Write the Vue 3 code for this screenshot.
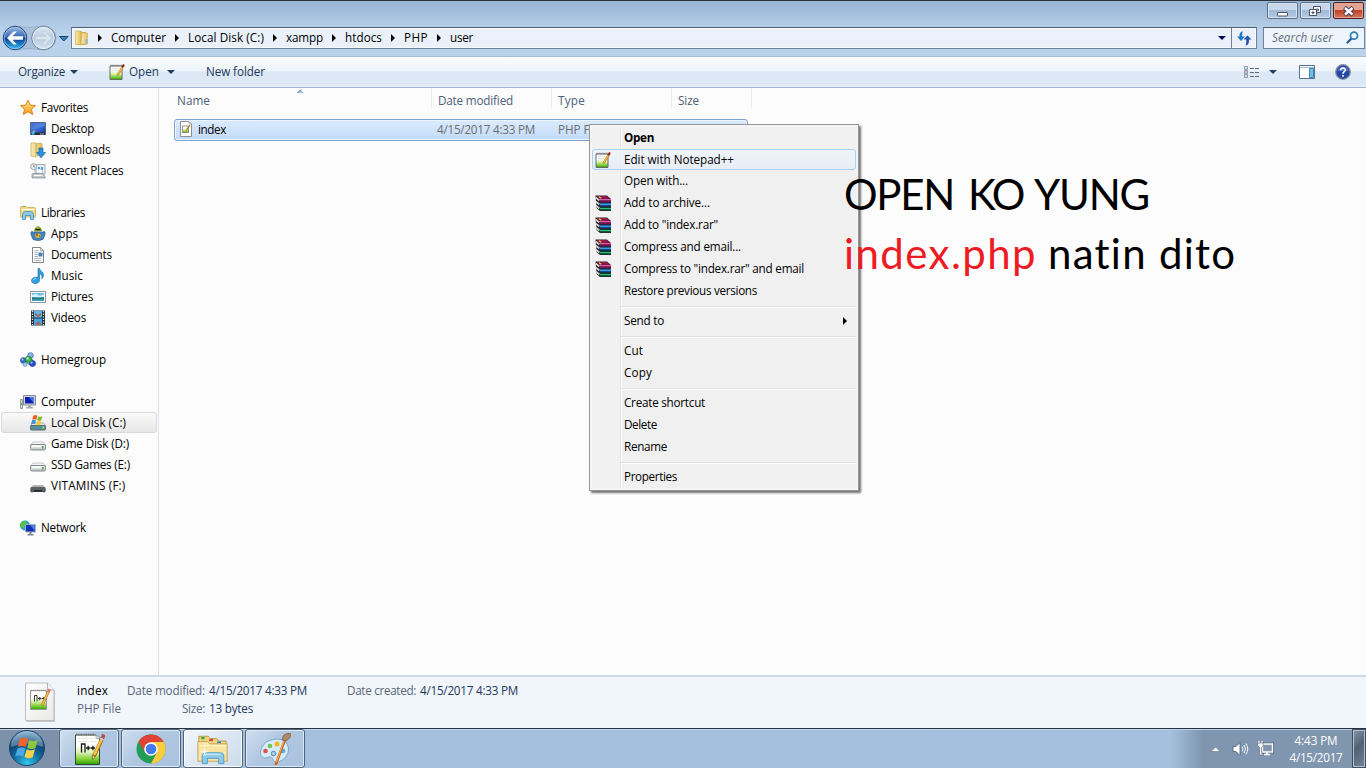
<script setup>
const fit = (el, { value }) => {
  el.style.letterSpacing = '0px'
  const n = el.textContent.length
  const natural = el.getBoundingClientRect().width
  el.style.letterSpacing = (value - natural) / n + 'px'
}
const vFit = { mounted: fit, updated: fit }

const crumbs = [
  { t: 'Computer', w: 55 }, { t: 'Local Disk (C:)', w: 76 }, { t: 'xampp', w: 37 },
  { t: 'htdocs', w: 37 }, { t: 'PHP', w: 24 }, { t: 'user', w: 23 },
]
const nav = [
  [{ t: 'Favorites', w: 47, i: 'star' }, { t: 'Desktop', w: 43, i: 'desktop' }, { t: 'Downloads', w: 59.5, i: 'downloads' }, { t: 'Recent Places', w: 72.5, i: 'recent' }],
  [{ t: 'Libraries', w: 44, i: 'libraries' }, { t: 'Apps', w: 27, i: 'apps' }, { t: 'Documents', w: 61, i: 'document' }, { t: 'Music', w: 32, i: 'music' }, { t: 'Pictures', w: 42, i: 'picture' }, { t: 'Videos', w: 35, i: 'video' }],
  [{ t: 'Homegroup', w: 65, i: 'homegroup' }],
  [{ t: 'Computer', w: 54.5, i: 'computer' }, { t: 'Local Disk (C:)', w: 75, i: 'osdisk', sel: true }, { t: 'Game Disk (D:)', w: 78, i: 'disk' }, { t: 'SSD Games (E:)', w: 79, i: 'disk' }, { t: 'VITAMINS (F:)', w: 74.500, i: 'usb' }],
  [{ t: 'Network', w: 45, i: 'network' }],
]
const menu = [
  { t: 'Open', w: 30, bold: true },
  { t: 'Edit with Notepad++', w: 110, i: 'npp', hot: true },
  { t: 'Open with...', w: 64 },
  { t: 'Add to archive...', w: 86, i: 'rar' },
  { t: 'Add to "index.rar"', w: 94, i: 'rar' },
  { t: 'Compress and email...', w: 117, i: 'rar' },
  { t: 'Compress to "index.rar" and email', w: 180, i: 'rar' },
  { t: 'Restore previous versions', w: 133 },
  { sep: true },
  { t: 'Send to', w: 40, sub: true },
  { sep: true },
  { t: 'Cut', w: 19 }, { t: 'Copy', w: 28 },
  { sep: true },
  { t: 'Create shortcut', w: 81 }, { t: 'Delete', w: 33 }, { t: 'Rename', w: 43 },
  { sep: true },
  { t: 'Properties', w: 53 },
]
const tasks = ['nppbig', 'chrome', 'explorer', 'paint']
</script>

<template>
  <div class="screen">
    <svg class="defs" width="0" height="0">
      <defs>
        <linearGradient id="gBlue" x1="0" y1="0" x2="0" y2="1"><stop offset="0" stop-color="#9fbfe8" /><stop offset=".48" stop-color="#2f62b4" /><stop offset=".52" stop-color="#0a3b94" /><stop offset="1" stop-color="#35c5fb" /></linearGradient>
        <linearGradient id="gGrey" x1="0" y1="0" x2="0" y2="1"><stop offset="0" stop-color="#dde8f4" /><stop offset=".5" stop-color="#b9cbdf" /><stop offset="1" stop-color="#d5e3f2" /></linearGradient>
        <linearGradient id="gFolder" x1="0" y1="0" x2="1" y2="0"><stop offset="0" stop-color="#fbeeb0" /><stop offset="1" stop-color="#e3bf5c" /></linearGradient>
        <linearGradient id="gGreen" x1="0" y1="0" x2="0" y2="1"><stop offset=".35" stop-color="#fff" /><stop offset=".58" stop-color="#dcf2b4" /><stop offset=".82" stop-color="#7fd035" /><stop offset="1" stop-color="#2aa005" /></linearGradient>
        <linearGradient id="gScreen" x1="0" y1="0" x2="1" y2="1"><stop offset="0" stop-color="#1f48a8" /><stop offset=".5" stop-color="#3a70dc" /><stop offset="1" stop-color="#153088" /></linearGradient>
        <linearGradient id="gStar" x1="0" y1="0" x2="0" y2="1"><stop offset="0" stop-color="#ffe98a" /><stop offset="1" stop-color="#f89a1c" /></linearGradient>
        <linearGradient id="gDisk" x1="0" y1="0" x2="0" y2="1"><stop offset="0" stop-color="#fff" /><stop offset="1" stop-color="#b9bec3" /></linearGradient>
        <linearGradient id="gPage" x1="0" y1="0" x2="1" y2="1"><stop offset="0" stop-color="#fff" /><stop offset="1" stop-color="#e9e9e6" /></linearGradient>
        <radialGradient id="gOrb" cx=".5" cy=".95" r=".9"><stop offset="0" stop-color="#35c8f2" /><stop offset=".45" stop-color="#11699c" /><stop offset=".75" stop-color="#0d4270" /><stop offset="1" stop-color="#6d9cc0" /></radialGradient>
      </defs>
      <symbol id="star" viewBox="0 0 16 16"><path d="M8 .2 10.200 5.100 15.500 5.600 11.500 9.200 12.700 14.500 8 11.700 3.300 14.500 4.500 9.200.5 5.600 5.800 5.100z" fill="url(#gStar)" stroke="#dc8128" /></symbol>
      <symbol id="desktop" viewBox="0 0 16 16"><path d="M.5 1.500h15v12H.5z" fill="url(#gScreen)" stroke="#4d6489" /><path d="M1 2h14v3L1 9z" fill="#6fa0ec" opacity=".45" /><path d="M1 11.500h14V14H1z" fill="#282f3c" /><circle cx="3" cy="12" r="1.700" fill="#42baf0" /><path d="M3.500 9.500h1.200v1.600H3.500z" fill="#ffd337" /><path d="M10 12.500h4v1h-4z" fill="#aaa" /></symbol>
      <symbol id="folder" viewBox="0 0 16 16"><path d="M2 1.500h5.500l1 1H12v12H2z" fill="#e0bc5c" stroke="#bf9a42" stroke-width=".6" /><path d="M1.500 1h5v14l-5-1z" fill="url(#gFolder)" stroke="#d0ac58" stroke-width=".6" /><path d="M8 3h5.500v11H7z" fill="url(#gFolder)" stroke="#d0ac58" stroke-width=".6" /><path d="M11.500 9H13v4h-1.500z" fill="#73bce9" /></symbol>
      <symbol id="downloads" viewBox="0 0 16 16"><path d="M1 1h5v14l-5-1zM6.500 1.500H12V13l-5 1z" fill="url(#gFolder)" stroke="#c9a44e" stroke-width=".7" /><path d="M9 6h4v4.500h2.700L11 15.800 6.500 10.500H9z" fill="#2a92dc" stroke="#1467a8" stroke-width=".7" /></symbol>
      <symbol id="recent" viewBox="0 0 16 16"><path d="M5 1.500h10V11H5z" fill="#e9eef2" stroke="#8e969d" stroke-width=".8" /><path d="M6.500 6h6v4h-6z" fill="#fff" stroke="#8eb2cf" stroke-width=".5" /><path d="M8 4h2v2H8zM11 4h2v3h-2z" fill="#4aa3dc" /><path d="M2 10.500h11l2.500 4.500H2z" fill="#c4c7ca" stroke="#868b90" stroke-width=".7" /><path d="M4 12.500h8" stroke="#fff" /><circle cx="3.700" cy="3.700" r="3" fill="#f1f3f4" stroke="#969da4" /><path d="M3.700 1.800v2.200h1.600" fill="none" stroke="#555" stroke-width=".7" /></symbol>
      <symbol id="libraries" viewBox="0 0 16 16"><path d="M.5 2.500q0-1 1-1h5l1 1h6.500l1.500 1V12H.5z" fill="#f4da86" stroke="#c9a850" stroke-width=".8" /><path d="M1 4.500h14" stroke="#fffbe0" /><path d="M3 1.500h2" stroke="#55b850" /><path d="M2.500 14.500V9.500q.5-3 3-3h5q2.500 0 3 3v5h-3v-4h-5v4z" fill="#8bcaec" stroke="#3f8fbd" stroke-width=".8" /></symbol>
      <symbol id="apps" viewBox="0 0 16 16"><path d="M4.500 5Q5 .8 8 .8t3.500 4.200z" fill="#a6c91d" stroke="#4c7020" stroke-width=".6" /><path d="M5.500 3.500h5" stroke="#141414" stroke-width="1.300" /><path d="M1 6q1-1 2 0h10q1-1 2 0v2.500l-2 5Q8 15.500 3 13.500L1 8.500z" fill="#4683bc" stroke="#285c8d" stroke-width=".7" /><path d="m5 8.500 3-1 3 1.500-1 2.500H6z" fill="#ffc927" /><circle cx="7" cy="9" r="1.200" fill="#e3391b" /><circle cx="9.500" cy="10" r=".9" fill="#3cab38" /></symbol>
      <symbol id="document" viewBox="0 0 16 16"><path d="M2.500.5h8l3 3v12h-11z" fill="#fff" stroke="#858585" /><path d="M10.500.5v3h3" fill="#ddd" stroke="#858585" stroke-width=".7" /><path d="M4.500 3.500h4M4.500 5.500H8M4.500 7.500H8M4.500 9.500H8M4.500 11.500h7M4.500 13.500h7" stroke="#93a4b6" stroke-width=".8" /><path d="M8.500 5.500h4v4h-4z" fill="#3c7fb9" /></symbol>
      <symbol id="music" viewBox="0 0 16 16"><path d="M8 .5h1.500c.5 2.500 4 3.300 4 6.500 0 1.500-.8 2.800-1.700 3.800C12.500 7.500 11 6 9.600 6v6.300c0 2-2 3.200-4.400 3.200s-3.700-1.200-3.700-2.800c0-2 2-3.400 4.300-3.400H8z" fill="#2f9de2" stroke="#1765a5" stroke-width=".6" /><path d="M3 12.500q1-2 3-2" stroke="#a6dfff" fill="none" /></symbol>
      <symbol id="picture" viewBox="0 0 16 16"><path d="M.5 2.500h15v11H.5z" fill="#fff" stroke="#8695a4" /><path d="M2 4h12v8H2z" fill="#6ebff0" /><path d="M2 6q4-2 6 0t6-1v3H2z" fill="#d9f3ff" /><path d="M2 8q5 1 12 0v4H2z" fill="#287f76" /><path d="M2 10.500h12V12H2z" fill="#3da4c4" /></symbol>
      <symbol id="video" viewBox="0 0 16 16"><path d="M1 .5h14v15H1z" fill="#222c34" /><path d="M4 1h8v6.500H4z" fill="#58b8f1" /><path d="M4 8.500h8V15H4z" fill="#4aa5e5" /><path d="m5 3 3 2 3-2v2L8 7 5 5zM5 14.500l3-3 3 2v1z" fill="#b65c43" /><path d="M2.500 1v14M13.500 1v14" stroke="#e5ebef" stroke-width="1.300" stroke-dasharray="1.300 1.300" /></symbol>
      <symbol id="homegroup" viewBox="0 0 16 16"><path d="M3.500 8 10 3l3 8-4 1z" fill="none" stroke="#7caad8" stroke-width="2" /><circle cx="10.500" cy="3.500" r="2.800" fill="#8bb4e6" stroke="#3c6fba" stroke-width=".8" /><circle cx="3.300" cy="8.500" r="2.800" fill="#3171d4" stroke="#1d48a0" stroke-width=".8" /><circle cx="5" cy="12.500" r="2" fill="#a8c4ea" stroke="#5d87c4" stroke-width=".6" /><circle cx="12.500" cy="11.500" r="3" fill="#2b55cb" stroke="#1b3a98" stroke-width=".8" /><circle cx="8.500" cy="7.500" r="3.100" fill="#43b447" stroke="#197b33" stroke-width=".8" /><circle cx="7.600" cy="6.400" r="1.200" fill="#c3f4bc" /><circle cx="11.500" cy="10.500" r="1" fill="#a5c9ff" /><circle cx="2.500" cy="7.500" r=".9" fill="#b9d7ff" /></symbol>
      <symbol id="computer" viewBox="0 0 16 16"><path d="M3.500 1.500h12v9.500h-12z" fill="#d4d9df" stroke="#818a94" /><path d="M5 3h9v6.500H5z" fill="#0c20b4" /><path d="M9 3h5v6.500z" fill="#4378eb" /><path d="M8 11h3v2h2v1.500H6V13h2z" fill="#a5acb4" /><path d="M.5 5.500h2v9h-2z" fill="#d6dadc" stroke="#777" stroke-width=".7" /><path d="M1 9h1v2H1z" fill="#39bd3d" /></symbol>
      <symbol id="disk" viewBox="0 0 16 16"><path d="M3 6h10l2.500 3H.5z" fill="#f3f4f5" stroke="#a4a8ac" stroke-width=".6" /><rect x=".5" y="8.500" width="15" height="5.500" rx="1.500" fill="url(#gDisk)" stroke="#85898d" /><path d="M2 10.500h9" stroke="#fff" /><path d="M12 10h1.500v2.500H12z" fill="#39a42b" /></symbol>
      <symbol id="osdisk" viewBox="0 0 16 16"><path d="M2.500 8h11l2 3H.5z" fill="#e5e8e9" stroke="#888" stroke-width=".6" /><rect x=".5" y="10.500" width="15" height="4.500" rx="1" fill="#568f9d" stroke="#5d676d" /><path d="M12.500 11.500H14v2h-1.500z" fill="#a2ec58" /><path d="M3.300.8q2-1.500 4 0l-1 4q-2-1.200-4 0z" fill="#ed5a24" /><path d="M8 1.300q2 1 4.200 0l-1 4q-2 1-4 0z" fill="#79ba2e" /><path d="M2 5.300q2-1 4 0l-1 4q-2-1.200-4 0z" fill="#3f8fdf" /><path d="M6.800 5.800q2 1 4.200 0l-1 4q-2 1-4 0z" fill="#fdc72c" /></symbol>
      <symbol id="usb" viewBox="0 0 16 16"><path d="M3 7h10l2.500 3H.5z" fill="#b3b6b8" /><path d="M1 9.500h14q1 2.500 0 4.500h-2l-1-2H4l-1 2H1q-1-2 0-4.500z" fill="#5d6164" stroke="#44484a" stroke-width=".6" /><path d="M4 12h8l1 2H3z" fill="#2d3032" /></symbol>
      <symbol id="network" viewBox="0 0 16 16"><circle cx="5" cy="5.500" r="5" fill="#2b96df" /><path d="M2 1.500 6 1l1.500 2-3 2L4 9 1 7q-2-3 1-5.500z" fill="#55c545" /><path d="M5.500 4.500h10V12h-10z" fill="#1033bd" stroke="#a6b0bd" /><path d="M10 5h5v6z" fill="#4b79eb" /><path d="M9.500 12h2v2h2v1.500h-6V14h2z" fill="#7c8792" /></symbol>
      <symbol id="npp" viewBox="0 0 16 16"><path d="M1 2h12v13.500H1z" fill="url(#gGreen)" stroke="#686a69" /><path d="M1.500 1.500h11" stroke="#666" stroke-width="1.500" stroke-dasharray="1 1" /><path d="M3 4.500h7M3 6.500h6" stroke="#dcdcdc" stroke-width=".8" /><path d="M13.500 3 8.300 11.500" stroke="#b07818" stroke-width="2.200" /><path d="M13.300 3 8.600 11" stroke="#fbc63c" stroke-width="1.200" /><path d="m13.400 3.200 1.500-2.600" stroke="#8e1414" stroke-width="2" /></symbol>
      <symbol id="rar" viewBox="0 0 16 16">
        <path d="M.5.500H12L16 4v12H5L1.500 13z" fill="#2a2230" />
        <path d="M1.300 1h10.200L15 3.800H4.800z" fill="#94184f" /><path d="M5 4h11v1.500H5z" fill="#e35aae" /><path d="M5 5.500h11V7H5z" fill="#7c1047" />
        <path d="M5 7.500h10.500v1H5z" fill="#0e2d66" /><path d="M5 8.500h11V10H5z" fill="#3c9be0" /><path d="M5 10h11v1.200H5z" fill="#0d4a94" />
        <path d="M5 12h10.500v1H5z" fill="#07412a" /><path d="M5 13h11v1.300H5z" fill="#2dc077" /><path d="M5 14.300h11v1H5z" fill="#08603a" />
        <path d="m.8 2.600 3.500 2.800M.8 6.600l3.500 2.800M.8 10.600l3.500 2.800" stroke="#fff" stroke-width="1.800" /><path d="m.8 2.600 3.500 2.800M.8 6.600l3.500 2.800M.8 10.600l3.500 2.800" stroke="#777" stroke-width=".5" />
        <path d="m4 1.800 2.300 1.400" stroke="#f2cf28" stroke-width="1.300" />
      </symbol>
      <symbol id="file" viewBox="0 0 16 16"><path d="M2.500.5h8.500L13.500 3v12.500h-11z" fill="#fdfdfb" stroke="#8e8e8e" /><path d="M11 .5V3h2.500" fill="none" stroke="#aaa" stroke-width=".7" /><path d="M4.500 5h6v6.500h-6z" fill="url(#gGreen)" stroke="#858585" stroke-width=".9" /><path d="m11.800 4-3.600 5.500" stroke="#b27c1f" stroke-width="1.300" /></symbol>
      <symbol id="bigfile" viewBox="0 0 32 40"><path d="M2.500 2h22l6.500 7v31H2.500z" fill="#c8c8c8" /><path d="M1.500 1h22l6.500 7v30.500H1.500z" fill="url(#gPage)" stroke="#bdbdbd" /><path d="M23.500 1v7H30" fill="#f6f6f6" stroke="#b5b5b5" /><path d="M6.500 8.500h16v19h-16z" fill="url(#gGreen)" stroke="#999" /><path d="M7 8.500h15" stroke="#888" stroke-width="1.600" stroke-dasharray="1 1" /><path d="M10.500 19.500v-6h2.500v6M14 16.500h3.500M15.800 15v3.500m2.200-2h3.500M19.800 15v3.500" fill="none" stroke="#222" stroke-width=".9" /><path d="M24.500 9.500 18 23.500" stroke="#b0762a" stroke-width="2.800" /><path d="M24.500 9.500 18.300 23" stroke="#f4bd52" stroke-width="1.600" /><path d="m24.300 10 1.300-2.800" stroke="#d6786f" stroke-width="2.800" /></symbol>
      <symbol id="nppbig" viewBox="0 0 32 32"><path d="M2.500 2h20.500l3.500 3v26.500h-24z" fill="url(#gGreen)" stroke="#3b443b" /><path d="M3 1.500h19" stroke="#777" stroke-width="2" stroke-dasharray="1.200 1.200" /><path d="M23 2v3.500h4" fill="#e8e8e8" stroke="#888" stroke-width=".6" /><path d="M5 5.500h16M5 8.500h18M5 20.500h14" stroke="#d9e1d6" stroke-width=".7" /><path d="M8.500 19.500V11h3.500v8.500M13 15h4.500M15.200 12.800v4.400M18 15h4M20 12.800v4.400" fill="none" stroke="#181818" stroke-width="1.300" /><path d="M29.500 5 21 23" stroke="#a66a18" stroke-width="3.800" /><path d="M29.200 5 21.300 22" stroke="#ffc747" stroke-width="2.200" /><path d="M29 6 31 1.500" stroke="#b3525a" stroke-width="3.800" /><path d="m28.500 7 .8-1.700" stroke="#c9ccd4" stroke-width="3.800" /><path d="m19.300 22.200 3.400 1.600-3.200 2.700z" fill="#e8c8a0" stroke="#6c4c24" stroke-width=".6" /></symbol>
      <symbol id="chrome" viewBox="0 0 32 32"><circle cx="16" cy="16" r="14.500" fill="#249c56" /><path d="M28.560 8.750A14.500 14.500 0 0 1 16 30.500L22 19.500 16 8.750z" fill="#fdcd40" /><path d="M3.440 8.750A14.500 14.500 0 0 1 28.560 8.750L16 9l-6 10z" fill="#df4335" /><circle cx="16" cy="16" r="6.800" fill="#fff" /><circle cx="16" cy="16" r="5.300" fill="#427bec" /></symbol>
      <symbol id="explorer" viewBox="0 0 34 32"><path d="M2 8V2.500h10l2 2.500h7l2 2.500h8V14H2z" fill="#efd684" stroke="#b39243" /><path d="M4.500 4.500H8" stroke="#25a844" stroke-width="2.200" /><path d="M13 6.500h4" stroke="#d2482e" stroke-width="2.200" /><path d="M21.500 9h4" stroke="#3585ce" stroke-width="2.200" /><path d="M1 8h10.500l2 2.500H32v18.500H1z" fill="#fae7a5" stroke="#c3a150" /><path d="M2 12.500h29.500" stroke="#fff7cf" /><path d="M2 15h29M2 18h29" stroke="#f4dd95" stroke-width=".8" /><path d="M5.500 31.500V23q.5-3 3.500-3h16q3 0 3.500 3v8.500h-5.500V26H11v5.500z" fill="#8ecbe9" stroke="#4d9cc9" /><path d="M7 23q.5-1.500 2-1.500h16" stroke="#e9faff" fill="none" /><path d="m8 13.500.8 4.700 4.200.8-4.200.8-.8 4.700-.8-4.700L3 19l4.200-.8z" fill="#fff" /></symbol>
      <symbol id="paint" viewBox="0 0 32 32"><path d="M12 7c9-3 18 1 17.500 10-.5 7-6.500 11.500-12 12-4.500.3-2.500-4.500-6-5-3-.4-4 2-7 .8-4.500-2-3.500-8-1-11.500C5.500 10 8 8 12 7z" fill="#d5ebf9" stroke="#7ba6c6" /><circle cx="6.500" cy="18" r="2.300" fill="#e25343" /><circle cx="11" cy="13" r="2.300" fill="#76c548" /><circle cx="18" cy="11" r="2.500" fill="#f4b51f" /><circle cx="14.500" cy="20.500" r="2.300" fill="#a5cce5" stroke="#5f90b5" /><circle cx="24" cy="18" r="2.300" fill="#53abe1" /><path d="M25.500 8 21 20l-4 11" stroke="#c96a20" stroke-width="2.600" fill="none" stroke-linecap="round" /><path d="M25 8 20.500 20l-3 9" stroke="#f6a95c" stroke-width="1.200" fill="none" /><path d="m23 6.500 2-4.500q4-3 7.500-1-.5 4-5.500 7z" fill="#b08a68" stroke="#775033" stroke-width=".7" /></symbol>
    </svg>

    <header class="title">
      <div class="winbtns">
        <span class="wb"><svg width="30" height="17"><rect x="9.500" y="9.500" width="10" height="3.500" rx=".5" fill="#fff" stroke="#4a5263" /></svg></span>
        <span class="wb"><svg width="30" height="17"><path d="M12.500 3.500h7v6h-7z" fill="#fff" stroke="#4a5263" /><path d="M15 6h2.500v2H15z" fill="#a6bedb" stroke="#4a5263" stroke-width=".8" /><path d="M8.500 6.500h7v6h-7z" fill="#fff" stroke="#4a5263" /><path d="M11 9h2v1.200h-2z" fill="#a6bedb" stroke="#4a5263" /></svg></span>
        <span class="wb close"><svg width="29" height="17"><path d="m10.500 4.500 8.500 7.500m0-7.500-8.500 7.500" stroke="#4a3f52" stroke-width="4.400" /><path d="m11 5 7.500 6.500m0-6.500L11 11.500" stroke="#fff" stroke-width="2.400" /></svg></span>
      </div>
      <div class="navbar">
        <svg class="arrows" width="72" height="28" viewBox="0 0 72 28">
          <path d="M14 2q14 3 30 0a12 12 0 0 1 0 24q-14-3-30 0z" fill="#a9c0da" stroke="#8aa6c6" stroke-width=".7" />
          <circle cx="15" cy="14" r="11.700" fill="url(#gBlue)" stroke="#26406c" /><circle cx="15" cy="14" r="10.700" fill="none" stroke="#b7d6f4" stroke-width=".8" opacity=".8" />
          <path d="M7 14 13.500 7.500h3.300l-4.300 4.800H23v3.400H12.500l4.300 4.800h-3.300z" fill="#fff" />
          <circle cx="43.500" cy="14" r="11.700" fill="url(#gGrey)" stroke="#697f9a" /><circle cx="43.500" cy="14" r="10.700" fill="none" stroke="#edf5fc" stroke-width=".8" />
          <path d="M51.500 14 45 7.500h-3.300l4.300 4.800H35.500v3.400H46l-4.300 4.800H45z" fill="#d9e5f1" stroke="#b3c5d9" stroke-width=".5" />
          <path d="M59.500 12.500h8.500l-4.200 4.500z" fill="#2f88b8" stroke="#1c3f70" />
        </svg>
        <div class="address">
          <svg class="fold" width="16" height="16"><use href="#folder" /></svg>
          <span v-for="c in crumbs" :key="c.t" class="crumb"><i class="tri"></i><span v-fit="c.w">{{ c.t }}</span></span>
          <i class="caret navy"></i>
          <span class="refresh"><svg width="16" height="16" viewBox="0 0 16 16"><path d="M7 1.500C4 1.500 3.500 4 3.500 6.500H1l4 4.500 4-4.500H6.300C6.300 4.500 6 2.500 7 1.500z" fill="#1f7bc4" /><path d="M9.500 15.500c3 0 3.500-3 3.500-6h2.500L11.500 5.500l-4 4h2.700c0 3 .3 4.500-.7 6z" fill="#2652ac" /></svg></span>
        </div>
        <div class="search"><span v-fit="61">Search user</span><svg width="13" height="13" viewBox="0 0 13 13"><path d="m1.500 11.500 4-4" stroke="#275f9d" stroke-width="2.300" stroke-linecap="round" /><circle cx="8" cy="4.700" r="3.500" fill="#eef8ff" stroke="#2e7cba" stroke-width="1.700" /></svg></div>
      </div>
    </header>

    <div class="toolbar">
      <span class="organize"><span v-fit="47">Organize</span></span><i class="caret"></i>
      <svg class="tnpp" width="16" height="16"><use href="#npp" /></svg>
      <span v-fit="30">Open</span><i class="caret second"></i>
      <span v-fit="59" class="newf">New folder</span>
      <div class="tools">
        <svg width="16" height="12"><path d="M.5.500h3v3h-3zM.5 4.500h3v3h-3zM.5 8.500h3v3h-3z" fill="#fff" stroke="#8b9bb0" /><path d="M1.500 2h1M1.500 10h1" stroke="#3e7fbd" /><path d="M1.500 6h1" stroke="#d33" stroke-width="1.400" /><path d="M6 2.500h4m1 0h4M6 6.500h4m1 0h4M6 10.500h4m1 0h4" stroke="#5e6c7e" /></svg>
        <i class="caret view"></i>
        <svg class="pane" width="16" height="14"><path d="M.5.500h15v13H.5z" fill="#fff" stroke="#527198" /><path d="M1 2.500h14" stroke="#a7bdd3" /><path d="M10.500 3.500h4v9h-4z" fill="#6fc3e2" stroke="#3f83ad" /></svg>
        <svg width="16" height="16"><circle cx="8" cy="8" r="7.300" fill="#2348a5" stroke="#8b919c" stroke-width="1.300" /><path d="M2.500 7a5.700 5.700 0 0 1 11 0z" fill="#5478c8" /><path d="M5.700 6.200C5.700 3.200 10.500 3.400 10.300 6 10.200 7.800 8 7.600 8 9.700M8 11v1.700" stroke="#fff" stroke-width="1.600" fill="none" /></svg>
      </div>
    </div>

    <main class="body">
      <nav class="side">
        <div v-for="(g, gi) in nav" :key="gi" class="group">
          <div v-for="(n, ni) in g" :key="n.t" class="nrow" :class="{ child: ni > 0, sel: n.sel }">
            <svg width="16" height="16"><use :href="'#' + n.i" /></svg><span v-fit="n.w">{{ n.t }}</span>
          </div>
        </div>
      </nav>
      <section class="list">
        <div class="heads">
          <div class="h name"><span v-fit="33">Name</span><svg class="sort" width="8" height="5"><path d="M1 4 4 1l3 3z" fill="#9cc6dd" /><path d="M.5 4 4 .5" stroke="#345c78" fill="none" /></svg></div>
          <div class="h"><span v-fit="75">Date modified</span></div>
          <div class="h"><span v-fit="27">Type</span></div>
          <div class="h size"><span v-fit="21">Size</span></div>
        </div>
        <div class="frow">
          <svg width="16" height="16"><use href="#file" /></svg>
          <div class="fname"><span v-fit="28">index</span></div>
          <div class="fdate"><span v-fit="98">4/15/2017 4:33 PM</span></div>
          <div><span v-fit="44">PHP File</span></div>
        </div>
      </section>
    </main>

    <footer class="details">
      <svg class="dicon" width="32" height="40"><use href="#bigfile" /></svg>
      <div class="dgrid">
        <div class="c1"><b><span v-fit="31">index</span></b><em><span v-fit="44">PHP File</span></em></div>
        <div class="c2"><em><span v-fit="78">Date modified:</span></em><em><span v-fit="23">Size:</span></em></div>
        <div class="c3"><b><span v-fit="98">4/15/2017 4:33 PM</span></b><b><span v-fit="44">13 bytes</span></b></div>
        <div class="c4"><em><span v-fit="69">Date created:</span></em></div>
        <div class="c3"><b><span v-fit="98">4/15/2017 4:33 PM</span></b></div>
      </div>
    </footer>

    <div class="taskbar">
      <div class="start">
        <svg width="38" height="38" viewBox="0 0 38 38"><circle cx="19" cy="19" r="17.500" fill="url(#gOrb)" stroke="#1d4468" /><path d="M3 18a16 16 0 0 1 32 0q-16-7-32 0z" fill="#c6dff0" opacity=".38" /><path d="M12 10q4-2.500 8 0l-2.200 8q-4-2-8 0z" fill="#f0642b" /><path d="M21.200 11q4 2.300 8.500 0l-2.200 8q-4 2-8.300 0z" fill="#8fc73f" /><path d="M9.400 19.500q4-2 8 0l-2.200 8q-4-2-8 0z" fill="#4ca9e6" /><path d="M18.700 20.300q4 2.200 8.200 0l-2.200 8q-4 2-8.200-.2z" fill="#ffd04a" /></svg>
      </div>
      <div v-for="t in tasks" :key="t" class="task" :class="{ lit: t === 'explorer' }"><svg width="32" height="32"><use :href="'#' + t" /></svg></div>
      <div class="tray">
        <svg class="up" width="11" height="6"><path d="M1 5.500 5.500 1 10 5.500z" fill="#fff" stroke="#60738a" stroke-width=".6" /></svg>
        <svg class="vol" width="17" height="16" viewBox="0 0 17 16"><path d="M1 5.500h3L8 1.500v13L4 10.500H1z" fill="#fff" stroke="#4d5d70" stroke-width=".8" /><path d="M10 5.500q2 2.500 0 5M12 4q3 4 0 8M13.800 2.500q4 5.500 0 11" fill="none" stroke="#f3f7fa" /></svg>
        <svg class="net" width="17" height="17" viewBox="0 0 17 17"><path d="M5.500 4h10v8h-10z" fill="#8195ad" stroke="#3e4d5f" stroke-width="2.600" /><path d="M5.500 4h10v8h-10z" fill="#8195ad" stroke="#fff" stroke-width="1.400" /><path d="M7 14.500h6M10 12v2" stroke="#fff" stroke-width="1.500" /><path d="M.8 3h5.400v2.500L4.700 7.500v6H6V15H2.500V7.500L.8 5.500z" fill="#fff" stroke="#4d5d70" stroke-width=".6" /><path d="M2 .8V3m3-2.200V3" stroke="#fff" /></svg>
        <div class="clock"><div><span v-fit="43">4:43 PM</span></div><div><span v-fit="53">4/15/2017</span></div></div>
        <div class="peek"></div>
      </div>
    </div>

    <div class="menu">
      <template v-for="(m, k) in menu" :key="k">
        <div v-if="m.sep" class="sep"></div>
        <div v-else class="mi" :class="{ hot: m.hot, bold: m.bold }">
          <div class="mic"><svg v-if="m.i" width="16" height="16"><use :href="'#' + m.i" /></svg></div>
          <span v-fit="m.w">{{ m.t }}</span><i v-if="m.sub" class="tri sub"></i>
        </div>
      </template>
    </div>

    <div class="caption">
      <div><span v-fit="110">OPEN</span><span v-fit="14">&nbsp;</span><span v-fit="55">KO</span><span v-fit="11">&nbsp;</span><span v-fit="115">YUNG</span></div>
      <div><span v-fit="193" class="red">index.php</span><span v-fit="11">&nbsp;</span><span v-fit="189">natin dito</span></div>
    </div>
  </div>
</template>

<style>
html, body { margin: 0; overflow: hidden; }
</style>

<style scoped>
.screen { position: relative; width: 1366px; height: 768px; display: flex; flex-direction: column; overflow: hidden; font: 11.700px/15px "Open Sans", "Noto Sans", sans-serif; color: #000; background: #fcfcfc; white-space: nowrap; }
.screen * { box-sizing: border-box; }
.defs { position: absolute; }
svg { display: block; flex: none; }
span { display: inline-block; }
i, em, b { font-style: normal; font-weight: normal; }
.title { height: 57px; flex: none; border-top: 1px solid #30323a; background: linear-gradient(#98b4d3, #a9c3e0 16px, #b9d1ea 30px, #b9d1ea); border-bottom: 1px solid #a5bbd6; display: flex; flex-direction: column; }
.winbtns { display: flex; gap: 1px; justify-content: flex-end; height: 22px; padding: 1px 2px 0 0; }
.wb { height: 17px; width: 31px; border: 1px solid #5d7088; border-radius: 2px; box-shadow: inset 0 0 0 1px #d7e4f3; background: linear-gradient(#c8d8ea 45%, #a0b9d6 50%, #b3cbe5); }
.wb + .wb { margin-left: 1px; }
.wb.close { border-color: #521d20; box-shadow: inset 0 0 0 1px #e6a493; background: linear-gradient(#e2a394 45%, #c23f28 50%, #d67b5b); }
.navbar { display: flex; height: 34px; align-items: center; padding-left: 0; }
.arrows { margin-top: -2px; }
.address { width: 1186px; margin-left: -1px; margin-top: -3px; height: 22px; border: 1px solid #6d8198; border-top-color: #4e5d70; background: #eaf1fa; box-shadow: inset 0 0 0 1px #f7fbff; display: flex; align-items: center; }
.fold { margin: 0 -1px 0 2px; }
.crumb { display: flex; align-items: center; padding-left: 9px; height: 20px; }
.tri { width: 0; height: 0; border: 4px solid transparent; border-left: 4px solid #000; border-right: 0; margin-right: 9px; }
.caret { width: 0; height: 0; border: 4px solid transparent; border-top: 4px solid #223e67; border-bottom: 0; }
.caret.navy { margin-left: auto; margin-right: 5px; border-top-color: #00005a; }
.refresh { height: 20px; width: 25px; border-left: 1px solid #6d8198; display: flex; align-items: center; justify-content: center; }
.search { width: 102px; height: 22px; margin-left: 6px; margin-top: -3px; border: 1px solid #6d8198; border-top-color: #4e5d70; background: #edf4fb; display: flex; align-items: center; justify-content: space-between; padding: 0 5px 0 8px; color: #66707a; font-style: italic; }
.toolbar { height: 31px; flex: none; display: flex; align-items: center; padding-left: 18px; padding-bottom: 1px; color: #1e395b; border-bottom: 1px solid #a0b4d0; background: linear-gradient(#fbfdff, #eef4fb 45%, #dde8f5 50%, #dde8f6 90%, #e6eefa); }
.organize { margin-right: 5px; }
.tnpp { margin: 0 4px 0 31px; }
.caret.second { margin: 0 31px 0 8px; }
.tools { margin-left: auto; display: flex; align-items: center; padding-right: 15px; }
.caret.view { margin: 0 22px 0 9px; }
.pane { margin-right: 20px; }
.body { flex: none; height: 587px; display: flex; }
.side { width: 159px; border-right: 1px solid #d6e5f5; padding-top: 9px; }
.group { margin-bottom: 21px; }
.nrow { height: 21px; padding-left: 20px; display: flex; align-items: center; gap: 5px; }
.nrow.child { padding-left: 30px; }
.nrow.sel { margin: 0 1px; padding-left: 28px; border: 1px solid #d9d9d9; border-radius: 3px; background: linear-gradient(#fafafa, #e6e6e6); }
.list { flex: 1; padding-left: 12px; }
.heads { display: flex; height: 25px; color: #4c607a; }
.h { width: 120px; padding: 5px 0 0 6px; border-right: 1px solid; border-image: linear-gradient(#dde9f7, #e4edf8 60%, #fcfcfc) 1; }
.h.name { width: 261px; position: relative; }
.h.size { width: 80px; }
.sort { position: absolute; left: 126px; top: 1px; }
.frow { margin: 6px 0 0 3px; width: 574px; height: 22px; border: 1px solid #7da2ce; border-radius: 3px; box-shadow: inset 0 0 0 1px #ecf4fd; background: linear-gradient(#dcebfc, #c1dbfc); display: flex; align-items: center; padding: 0 0 2px 3px; color: #6d6d6d; }
.fname { margin-left: 4px; width: 239px; color: #000; }
.fdate { width: 121px; }
.details { flex: none; height: 53px; border-top: 2px solid #cbdbee; background: #f1f5fc; display: flex; padding: 4px 0 0 24px; }
.dicon { margin-top: 1px; }
.dgrid { display: flex; margin-left: 21px; }
.dgrid b, .dgrid em { display: block; height: 18px; line-height: 18px; }
.dgrid em { color: #5a6779; }
.dgrid b { color: #1e395b; }
.c1 { width: 50px; }
.dgrid .c1 b { color: #000; }
.c2 { width: 78px; text-align: right; display: flex; flex-direction: column; align-items: flex-end; }
.c3 { margin-left: 4px; width: 138px; }
.c4 { width: 69px; }
.taskbar { flex: none; height: 40px; border-top: 1px solid #263242; box-shadow: inset 0 1px 0 #c1d6eb; background: linear-gradient(90deg, #7d91aa 58px, #a5c0dc 62px, #a5c0de 1170px, #8096b0 1203px, #8095ae); display: flex; }
.start { width: 59px; padding-left: 8px; }
.task { width: 60px; height: 39px; margin-right: 2px; border: 1px solid #50647c; border-radius: 3px; box-shadow: inset 0 0 0 1px #dbe8f5; background: linear-gradient(135deg, #d0dfef, #b0c7e1 45%, #a9c2de); display: flex; justify-content: center; align-items: center; }
.task.lit { background: linear-gradient(135deg, #f3f7fb, #dce7f3 50%, #cddceb); box-shadow: inset 0 0 0 1px #fff; }
.tray { margin-left: auto; display: flex; align-items: center; color: #fff; }
.vol { margin: 0 8px 0 11px; }
.net { margin-right: 15px; }
.clock { width: 54px; text-align: center; line-height: 17px; margin-right: 9px; }
.peek { width: 14px; height: 39px; border: 1px solid #424d5b; box-shadow: inset 0 0 0 1px #b2c0cf; background: linear-gradient(135deg, #8496aa, #526174 45%, #718399); }
.menu { position: absolute; left: 589px; top: 124px; width: 270px; height: 367px; padding: 2px; border: 1px solid #979797; background: linear-gradient(90deg, #f1f1f1 28px, #e2e3e3 28px, #e2e3e3 29px, #fff 29px, #fff 30px, #f0f0f0 30px) content-box, #f5f5f5; box-shadow: 2px 2px 2px rgba(0,0,0,.55); }
.mi { height: 22px; display: flex; align-items: center; border: 1px solid transparent; border-radius: 3px; padding-bottom: 3px; }
.mi.hot { border-color: #aecff7; background: linear-gradient(rgba(240,245,252,.8), rgba(228,237,248,.8)); height: 21px; margin-bottom: 1px; padding-bottom: 0; }
.mi.bold { font-weight: 700; padding-bottom: 1px; }
.mic { width: 31px; padding-left: 2px; }
.sep { height: 8px; margin-left: 29px; background: linear-gradient(transparent 3px, #e0e0e0 3px, #e0e0e0 4px, #fff 4px, #fff 5px, transparent 5px); }
.sub { margin-left: auto; margin-right: 8px; }
.caption { position: absolute; left: 844px; top: 165px; font: 42px/59px Lato, sans-serif; color: #000; }
.red { color: #ed1c24; }
</style>
